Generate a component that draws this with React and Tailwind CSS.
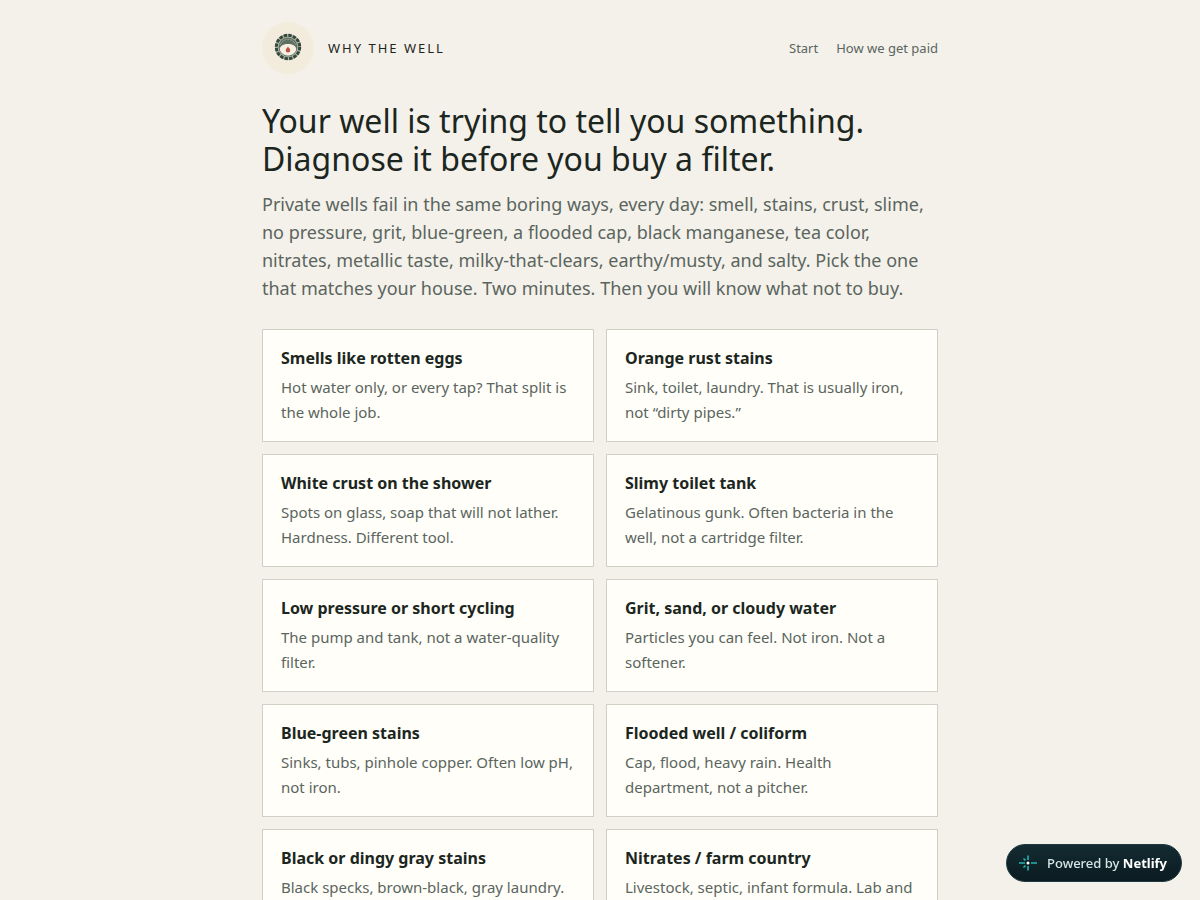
const topics = [
  { title: 'Smells like rotten eggs', text: 'Hot water only, or every tap? That split is the whole job.' },
  { title: 'Orange rust stains', text: 'Sink, toilet, laundry. That is usually iron, not “dirty pipes.”' },
  { title: 'White crust on the shower', text: 'Spots on glass, soap that will not lather. Hardness. Different tool.' },
  { title: 'Slimy toilet tank', text: 'Gelatinous gunk. Often bacteria in the well, not a cartridge filter.' },
  { title: 'Low pressure or short cycling', text: 'The pump and tank, not a water-quality filter.' },
  { title: 'Grit, sand, or cloudy water', text: 'Particles you can feel. Not iron. Not a softener.' },
  { title: 'Blue-green stains', text: 'Sinks, tubs, pinhole copper. Often low pH, not iron.' },
  { title: 'Flooded well / coliform', text: 'Cap, flood, heavy rain. Health department, not a pitcher.' },
  { title: 'Black or dingy gray stains', text: 'Black specks, brown-black, gray laundry.' },
  { title: 'Nitrates / farm country', text: 'Livestock, septic, infant formula. Lab and' },
];

function Logo() {
  return (
    <svg viewBox="0 0 52 52" className="size-[52px]" aria-hidden="true">
      <circle cx="26" cy="26" r="26" fill="#f3ecdd" />
      {/* ring of stones */}
      <circle cx="26" cy="25" r="11" fill="none" stroke="#b3b8a6" strokeWidth="4" />
      <circle cx="26" cy="25" r="11.7" fill="none" stroke="#34493d" strokeWidth="3" strokeDasharray="3.45 1.14" />
      <circle cx="26" cy="25" r="9.4" fill="#5d7061" />
      <path d="M18.500 22.500a8 8 0 0 1 15 0" fill="none" stroke="#a3ad9b" strokeWidth="1" strokeDasharray="2 1" />
      <path d="M17.800 27C18.200 23.800 21.500 22 26 22s7.800 1.800 8.200 5c-.4 4-4.200 6.500-8.200 6.500s-7.800-2.500-8.200-6.500z" fill="#f7f0e2" />
      <path d="M26 24.500c.5 1.300 2.300 2.200 2.300 3.800a2.300 2.300 0 0 1-4.600 0c0-1.600 1.800-2.500 2.300-3.800z" fill="#b9553f" />
    </svg>
  );
}

function NetlifyMark() {
  return (
    <svg viewBox="0 0 20 20" className="size-5" fill="none" stroke="#20b5ae" strokeWidth="1.6" aria-hidden="true">
      <path d="M10 2.500v4.500M10 13v4.500M1 10h6M13 10h6" />
      <path d="M5.500 5.500l2 2M5.500 14.500l2-2" />
      <circle cx="10" cy="10" r="1.500" fill="#fff" stroke="none" />
    </svg>
  );
}

export default function App() {
  return (
    <div className="min-h-screen bg-[#f4f1ea] font-['Noto_Sans',sans-serif] text-[#1c2621]">
      <div className="mx-auto max-w-[716px] px-5 pt-[22px] pb-16">
        <header className="flex items-center justify-between">
          <a href="#" className="flex items-center gap-3.5">
            <Logo />
            <span className="text-[13px] leading-5 tracking-[2px] uppercase">Why the Well</span>
          </a>
          <nav className="flex gap-[18px] text-[13px] leading-5 text-[#5a655e]">
            <a href="#">Start</a>
            <a href="#">How we get paid</a>
          </nav>
        </header>

        <main className="pt-7">
          <h1 className="text-[32px] leading-[38px]">
            Your well is trying to tell you something. Diagnose it before you buy a filter.
          </h1>
          <p className="mt-3 text-lg leading-7 text-[#5a655e]">
            Private wells fail in the same boring ways, every day: smell, stains, crust, slime, no pressure,
            grit, blue-green, a flooded cap, black manganese, tea color, nitrates, metallic taste,
            milky-that-clears, earthy/musty, and salty. Pick the one that matches your house. Two minutes.
            Then you will know what not to buy.
          </p>

          <div className="mt-[27px] grid gap-3 sm:grid-cols-2">
            {topics.map((topic) => (
              <a key={topic.title} href="#" className="border border-[#d2cfc5] bg-[#fffef9] px-[18px] py-4">
                <h2 className="text-base leading-[25px] font-bold">{topic.title}</h2>
                <p className="mt-1 text-[15px] leading-[25px] text-[#5a655e]">{topic.text}</p>
              </a>
            ))}
          </div>
        </main>
      </div>

      <a
        href="#"
        className="fixed right-[18px] bottom-[18px] flex h-[38px] items-center gap-[9px] rounded-full border border-[#1d3a40] bg-linear-to-b from-[#142b32] to-[#0b1b21] pr-3.5 pl-[11px] text-[13px] leading-5 text-[#d5e5e7]"
      >
        <NetlifyMark />
        <span className="font-medium">
          Powered by <strong className="font-bold text-white">Netlify</strong>
        </span>
      </a>
    </div>
  );
}
